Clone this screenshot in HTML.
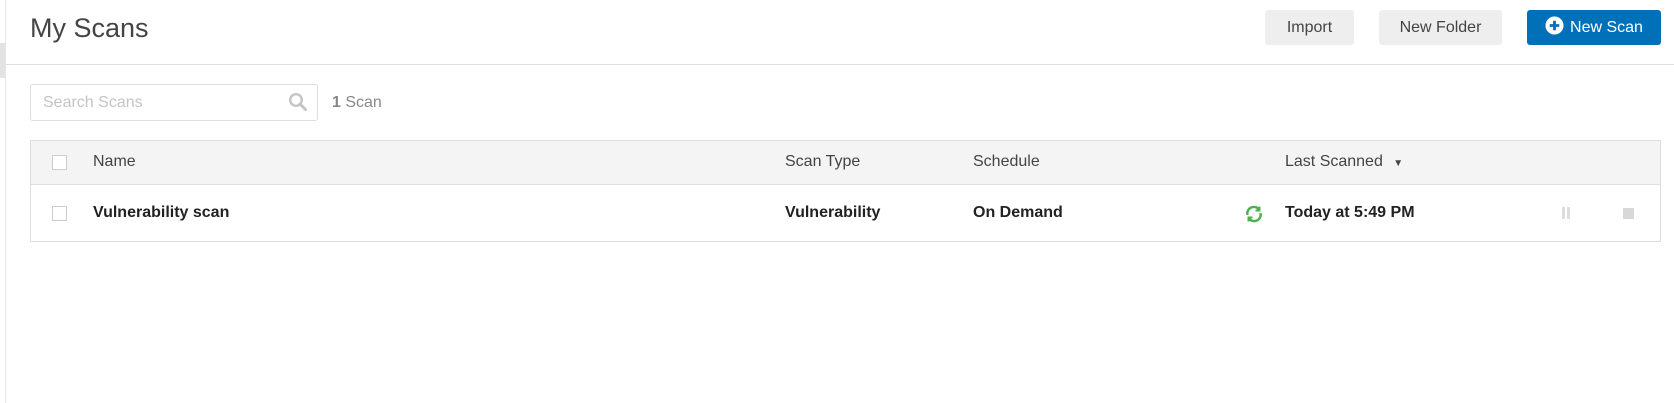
<!DOCTYPE html>
<html><head><style>
body{margin:0;width:1674px;height:403px;background:#fff;font-family:"Liberation Sans","DejaVu Sans",sans-serif;color:#333;position:relative;overflow:hidden}
.a{position:absolute}
.btn{position:absolute;top:10px;height:35px;border-radius:3px;background:#eee;color:#444;font-size:16px;line-height:35px;text-align:center}
.th{position:absolute;top:140px;font-size:16px;line-height:44px;color:#444}
.td{position:absolute;top:184px;font-size:16px;line-height:57px;font-weight:bold;color:#222}
.cb{position:absolute;left:52px;width:13px;height:13px;border:1px solid #ccc;background:#fff}
</style></head><body>
<div class="a" style="left:5px;top:0;width:1px;height:403px;background:#e6e6e6"></div>
<div class="a" style="left:0;top:43px;width:5px;height:35px;background:#e3e3e3"></div>
<div class="a" style="left:30px;top:10px;font-size:27px;color:#444;line-height:36px">My Scans</div>
<div class="btn" style="left:1265px;width:89px">Import</div>
<div class="btn" style="left:1379px;width:123px">New Folder</div>
<div class="btn" style="left:1527px;width:134px;background:#0071b9;color:#fff">
<svg width="19" height="19" viewBox="0 0 20 20" style="vertical-align:-3px;margin-right:6px"><circle cx="10" cy="10" r="9.5" fill="#fff"/><path d="M10 5v10M5 10h10" stroke="#0071b9" stroke-width="3"/></svg>New Scan</div>
<div class="a" style="left:6px;top:64px;width:1668px;height:1px;background:#ddd"></div>
<div class="a" style="left:30px;top:84px;width:286px;height:35px;border:1px solid #ddd;border-radius:3px"></div>
<div class="a" style="left:43px;top:84px;line-height:37px;font-size:16px;color:#c4c4c4">Search Scans</div>
<svg class="a" style="left:288px;top:92px" width="20" height="20" viewBox="0 0 20 20"><circle cx="8" cy="8" r="5.8" fill="none" stroke="#c4c4c4" stroke-width="2.4"/><path d="M12 12l5.5 5.5" stroke="#c4c4c4" stroke-width="3" stroke-linecap="round"/></svg>
<div class="a" style="left:332px;top:84px;line-height:37px;font-size:16px;color:#888"><b>1</b> Scan</div>
<div class="a" style="left:30px;top:140px;width:1629px;height:100px;border:1px solid #ddd"></div>
<div class="a" style="left:31px;top:141px;width:1629px;height:43px;background:#f4f4f4;border-bottom:1px solid #ddd"></div>
<div class="cb" style="top:155px"></div>
<div class="cb" style="top:206px"></div>
<div class="th" style="left:93px">Name</div>
<div class="th" style="left:785px">Scan Type</div>
<div class="th" style="left:973px">Schedule</div>
<div class="th" style="left:1285px">Last Scanned <span style="font-size:10px;margin-left:6px">▼</span></div>
<div class="td" style="left:93px">Vulnerability scan</div>
<div class="td" style="left:785px">Vulnerability</div>
<div class="td" style="left:973px">On Demand</div>
<div class="td" style="left:1285px">Today at 5:49 PM</div>
<svg class="a" style="left:1244px;top:204px" width="20" height="20" viewBox="0 0 20 20" fill="none" stroke="#4cb050" stroke-width="2.4"><path d="M3.5 11A6.5 6.5 0 0 1 15 5.5"/><path d="M16.5 9A6.5 6.5 0 0 1 5 14.5"/><path d="M15.5 2.5v4h-4" stroke-width="2"/><path d="M4.5 17.5v-4h4" stroke-width="2"/></svg>
<div class="a" style="left:1562px;top:207px;width:3px;height:12px;background:#ddd"></div>
<div class="a" style="left:1567px;top:207px;width:3px;height:12px;background:#ddd"></div>
<div class="a" style="left:1623px;top:208px;width:11px;height:11px;background:#d8d8d8"></div>
</body></html>
